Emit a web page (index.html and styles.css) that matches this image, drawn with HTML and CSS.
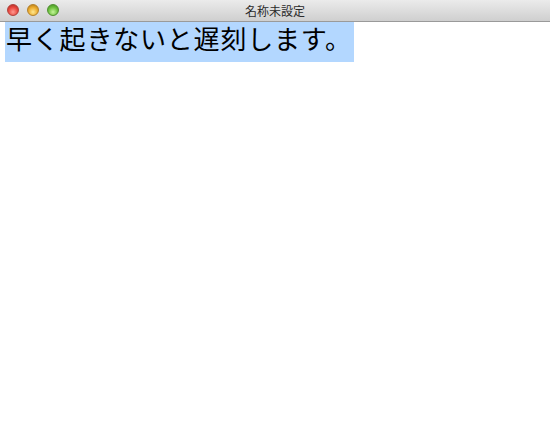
FILE: index.html
```html
<!DOCTYPE html>
<html lang="ja">
<head>
<meta charset="utf-8">
<link rel="stylesheet" href="styles.css">
</head>
<body>
<div class="window">
  <div class="titlebar">
    <div class="lights">
      <span class="light close"></span>
      <span class="light min"></span>
      <span class="light max"></span>
    </div>
    <div class="title">名称未設定</div>
  </div>
  <div class="content">
    <span class="sel">早く起きないと遅刻します。</span>
  </div>
</div>
</body>
</html>
```
FILE: styles.css
```css
html, body {
  margin: 0;
  padding: 0;
  background: #ffffff;
}
.window {
  width: 550px;
  height: 442px;
  display: flex;
  flex-direction: column;
  background: #fff;
}
.titlebar {
  position: relative;
  height: 21px;
  flex: none;
  background: linear-gradient(#ebebeb, #cfcfcf);
  border-bottom: 1px solid #9a9a9a;
  display: flex;
  align-items: center;
  justify-content: center;
}
.lights {
  position: absolute;
  left: 7px;
  top: 4px;
  display: flex;
  gap: 8px;
}
.light {
  width: 12px;
  height: 12px;
  border-radius: 50%;
  box-sizing: border-box;
}
.close {
  background: radial-gradient(circle at 50% 70%, #ff9a90 0%, #e8453c 55%, #a52a22 100%);
  border: 1px solid #b0403a;
}
.min {
  background: radial-gradient(circle at 50% 70%, #ffe890 0%, #eaa92a 55%, #a87218 100%);
  border: 1px solid #b48028;
}
.max {
  background: radial-gradient(circle at 50% 70%, #c4f59a 0%, #6cbf3c 55%, #3f8a22 100%);
  border: 1px solid #4f8f2f;
}
.title {
  font-family: "Noto Sans CJK JP", sans-serif;
  font-size: 12px;
  color: #2a2a2a;
  line-height: 21px;
}
.content {
  padding: 0 5px;
}
.sel {
  display: inline-block;
  background: #b3d7ff;
  font-family: "Noto Sans CJK JP", sans-serif;
  font-size: 26px;
  line-height: 32px;
  height: 32px;
  padding-bottom: 8px;
  padding-left: 1px;
  color: #000;
  width: 348px;
  white-space: nowrap;
  letter-spacing: 0.8px;
  box-sizing: content-box;
}
```
